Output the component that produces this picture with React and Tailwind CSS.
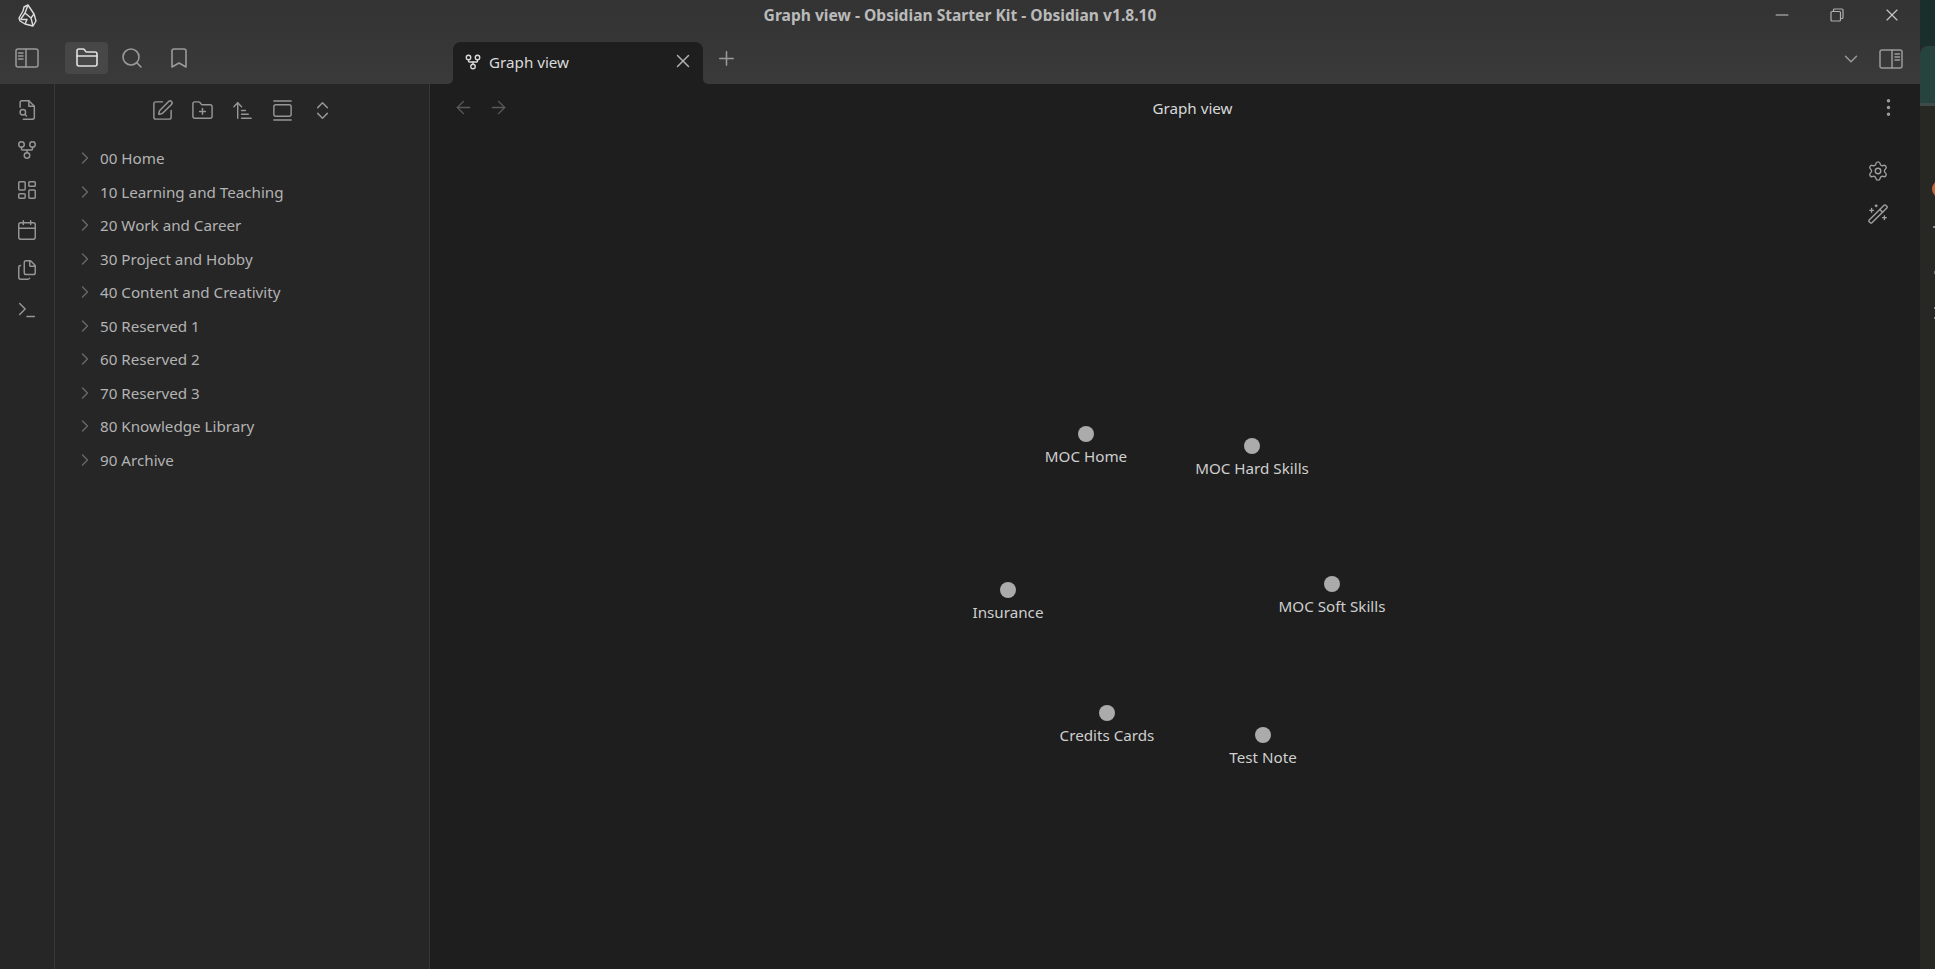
import React from "react";
import { FolderClosed, Search, Bookmark, GitFork, LayoutDashboard, Calendar, Files, Terminal, SquarePen, FolderPlus, ArrowUpNarrowWide, GalleryVertical, ChevronsUpDown, ChevronRight, X, Plus, ChevronDown, ArrowLeft, ArrowRight, MoreVertical, Settings, WandSparkles, Minus } from "lucide-react";

const folders = ["00 Home", "10 Learning and Teaching", "20 Work and Career", "30 Project and Hobby", "40 Content and Creativity", "50 Reserved 1", "60 Reserved 2", "70 Reserved 3", "80 Knowledge Library", "90 Archive"];
const nodes = [
  { name: "MOC Home", x: 656, y: 350 },
  { name: "MOC Hard Skills", x: 822, y: 362 },
  { name: "Insurance", x: 578, y: 506 },
  { name: "MOC Soft Skills", x: 902, y: 500 },
  { name: "Credits Cards", x: 677, y: 629 },
  { name: "Test Note", x: 833, y: 651 },
];

function QuickSwitch({ size = 22, strokeWidth = 1.6 }) {
  return (
    <svg width={size} height={size} viewBox="0 0 24 24" fill="none" stroke="currentColor" strokeWidth={strokeWidth} strokeLinecap="round" strokeLinejoin="round">
      <path d="M14 2v6h6" />
      <path d="M4.5 9V4a2 2 0 0 1 2-2H14l6 6v12a2 2 0 0 1-2 2H8" />
      <circle cx="7.5" cy="14.5" r="3" />
      <path d="M9.8 16.8 11.5 18.5" />
    </svg>
  );
}
const ribbon = [QuickSwitch, GitFork, LayoutDashboard, Calendar, Files, Terminal];
const navIcons = [SquarePen, FolderPlus, ArrowUpNarrowWide, GalleryVertical, ChevronsUpDown];

function Logo() {
  return (
    <svg width="20" height="24" viewBox="17 3 20 24" fill="none" stroke="#dcdcdc" strokeWidth="1.4" strokeLinejoin="round">
      <path d="M28 5 L34 14 L36 21 L33 26 L25 24 L20 21 L19 18 L23 11 L24 7 Z" />
      <path d="M28 5 L25 13 L20.5 19.5 M25 13 L31 18 L33 26 M31 18 L34 14 M20.5 19.5 L27 19.5 L25 24" />
    </svg>
  );
}

function SidebarToggle({ right }) {
  return (
    <svg width="24" height="20" viewBox="0 0 24 20" fill="none" stroke="#9a9a9a" strokeWidth="1.5" strokeLinecap="round">
      <rect x="1" y="1" width="22" height="18" rx="2" />
      {right ? <path d="M13 1V19M16 5h4.5M16 8h4.5M16 11h4.5" /> : <path d="M11 1V19M3.5 5H8M3.5 8H8M3.5 11H8" />}
    </svg>
  );
}

export default function App() {
  return (
    <div className="relative flex h-screen w-full overflow-hidden bg-[#272724] font-['Noto_Sans',sans-serif]">
      <div className="flex h-full w-[1920px] shrink-0 flex-col">
        <header className="h-[84px] shrink-0 bg-gradient-to-b from-[#333333] to-[#3a3a3a]">
          <div className="grid h-[30px] grid-cols-[1fr_auto_1fr] items-center">
            <div className="flex w-[54px] justify-center"><Logo /></div>
            <div className="pt-[1px] text-center text-[15.6px] font-bold text-[#bababa]">Graph view - Obsidian Starter Kit - Obsidian v1.8.10</div>
            <div className="flex items-center justify-end gap-[38px] pr-[18px] text-[#c8c8c8]">
              <Minus size={20} strokeWidth={1.4} />
              <svg width="14" height="14" viewBox="0 0 14 14" fill="none" stroke="#b0b0b0" strokeWidth="1.2"><rect x="1" y="3.5" width="9.5" height="9.5" rx="1" /><path d="M3.5 3.5V2a1 1 0 0 1 1-1H12a1 1 0 0 1 1 1v7.5a1 1 0 0 1-1 1h-1.5" /></svg>
              <X size={20} strokeWidth={1.4} />
            </div>
          </div>
          <div className="flex h-[54px] items-end">
            <div className="flex h-full w-[453px] shrink-0 items-center gap-[8px] pl-[15px] pt-[2px]">
              <SidebarToggle />
              <div className="ml-[18px] flex h-[32px] w-[43px] items-center justify-center rounded-[4px] bg-[#474747] text-[#e0e0e0]"><FolderClosed size={24} strokeWidth={1.6} /></div>
              <div className="flex w-[32px] justify-center text-[#9a9a9a]"><Search size={24} strokeWidth={1.6} /></div>
              <div className="flex w-[46px] justify-center text-[#9a9a9a]"><Bookmark size={24} strokeWidth={1.6} /></div>
            </div>
            <div className="relative flex h-[42px] w-[250px] shrink-0 items-center rounded-t-[8px] bg-[#1e1e1e] pb-[2px] pl-[11px] pr-[9px] text-[#dadada]">
              <div className="absolute bottom-0 left-[-5px] h-[5px] w-[5px] bg-[#1e1e1e]"><div className="h-full w-full rounded-br-[5px] bg-[#3a3a3a]" /></div>
              <div className="absolute bottom-0 right-[-5px] h-[5px] w-[5px] bg-[#1e1e1e]"><div className="h-full w-full rounded-bl-[5px] bg-[#3a3a3a]" /></div>
              <GitFork size={18} strokeWidth={1.8} className="mb-[1px]" />
              <span className="ml-[7px] flex-1 text-[15.2px]">Graph view</span>
              <X size={22} strokeWidth={1.6} className="mb-[2px] text-[#b0b0b0]" />
            </div>
            <div className="flex h-full flex-1 items-center pl-[12px] pt-[3px] text-[#9a9a9a]">
              <Plus size={23} strokeWidth={1.6} />
              <div className="flex-1" />
              <ChevronDown size={22} strokeWidth={1.6} />
              <div className="ml-[17px] mr-[17px]"><SidebarToggle right /></div>
            </div>
          </div>
        </header>
        <div className="flex min-h-0 flex-1">
          <aside className="flex w-[55px] shrink-0 flex-col items-center gap-[18px] border-r border-[#383838] bg-[#262626] pt-[15px] text-[#969696]">
            {ribbon.map((I, i) => <I key={i} size={22} strokeWidth={1.6} />)}
          </aside>
          <aside className="flex w-[375px] shrink-0 flex-col border-r border-[#383838] bg-[#262626]">
            <div className="flex h-[52px] items-center justify-center gap-[17px] text-[#969696]">
              {navIcons.map((I, i) => <I key={i} size={23} strokeWidth={1.5} />)}
            </div>
            <div className="pt-[6px] text-[15.2px] text-[#b3b3b3]">
              {folders.map((f) => (
                <div key={f} className="flex h-[33.5px] items-center">
                  <ChevronRight size={20} strokeWidth={1.8} className="mb-[1px] ml-[20px] text-[#666666]" />
                  <span className="ml-[5px]">{f}</span>
                </div>
              ))}
            </div>
          </aside>
          <main className="relative flex-1 bg-[#1e1e1e]">
            <div className="flex h-[46px] items-center pl-[22.5px] pr-[20.5px]">
              <ArrowLeft size={21} strokeWidth={1.6} className="text-[#5a5a5a]" />
              <ArrowRight size={21} strokeWidth={1.6} className="ml-[14px] text-[#5a5a5a]" />
              <div className="flex-1 pt-[2px] text-center text-[15.2px] text-[#d8d8d8]">Graph view</div>
              <MoreVertical size={23} strokeWidth={1.6} className="text-[#a0a0a0]" />
            </div>
            <div className="absolute left-[1437px] top-[76px] flex flex-col items-center gap-[21px] text-[#a0a0a0]">
              <Settings size={22} strokeWidth={1.5} />
              <WandSparkles size={22} strokeWidth={1.5} />
            </div>
            {nodes.map((n) => (
              <div key={n.name} className="absolute flex w-[160px] -translate-x-1/2 flex-col items-center" style={{ left: n.x, top: n.y - 8 }}>
                <div className="h-[16px] w-[16px] rounded-full bg-[#ababab]" />
                <div className="mt-[4px] text-[15.2px] leading-[20px] text-[#cfcfcf]">{n.name}</div>
              </div>
            ))}
          </main>
        </div>
      </div>
      <div className="relative flex h-full flex-1 flex-col bg-[#272724]">
        <div className="h-[46px] bg-[#1a2e2b]" />
        <div className="h-[60px] rounded-tl-[8px] border-b-[3px] border-[#3d4c49] bg-[#27433d]" />
        <div className="absolute left-[12px] top-[180px] h-[18px] w-[18px] rounded-full bg-[#c9633c]" />
        <div className="absolute right-0 top-[226px] h-[2px] w-[2px] bg-[#8a8a88]" />
        <div className="absolute right-0 top-[271px] h-[3px] w-[1px] bg-[#70706e]" />
        <div className="absolute right-0 top-[307px] h-[2px] w-[1px] bg-[#8a8a88]" />
        <div className="absolute right-0 top-[317px] h-[2px] w-[1px] bg-[#8a8a88]" />
      </div>
    </div>
  );
}
